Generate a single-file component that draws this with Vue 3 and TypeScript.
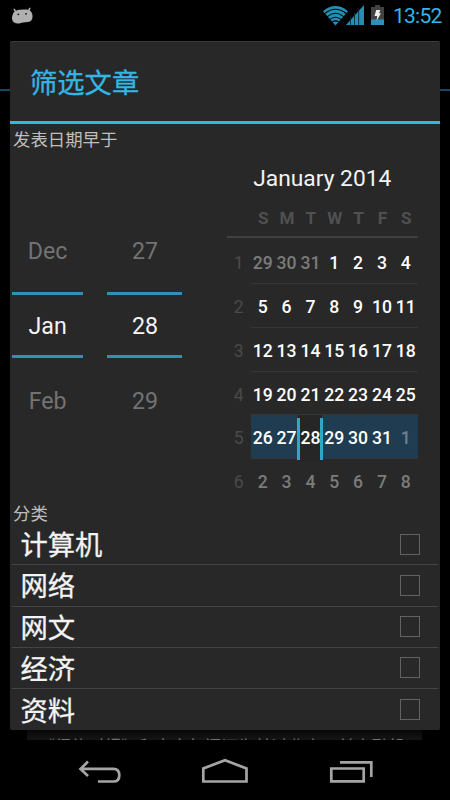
<script setup lang="ts">
interface Day { n: number; out?: boolean; picked?: boolean }
interface Week { no: number; days: Day[]; active: boolean }

const weekdays = ['S', 'M', 'T', 'W', 'T', 'F', 'S']
const previousMonth = [29, 30, 31]
const weeks: Week[] = Array.from({ length: 6 }, (_, w) => ({
  no: w + 1,
  active: w === 4,
  days: Array.from({ length: 7 }, (_, d) => {
    const i = w * 7 + d
    if (i < 3) return { n: previousMonth[i], out: true }
    const n = i - 2
    return n > 31 ? { n: n - 31, out: true } : { n, picked: n === 28 }
  }),
}))
const spinners = [
  { name: 'month', values: ['Dec', 'Jan', 'Feb'] },
  { name: 'day', values: ['27', '28', '29'] },
]
const categories = ['计算机', '网络', '网文', '经济', '资料']
</script>

<template>
  <div class="screen">
    <header class="status">
      <svg class="droid" width="24" height="18" viewBox="0 0 24 18">
        <path d="M3.2 2.4 5 5M18.8 1.4 17.4 4.4" stroke="#b0b0b0" stroke-width="1.5" stroke-linecap="round" />
        <path d="M1.8 7.5C3 3.4 7 2.9 11.5 2.6C17 2 20.3 3 21.3 7.3C22 11 21.2 13.2 19 14.4C16 15.6 12.5 14.8 9.8 15.9C6.5 17.2 2.6 16.3 1.4 13.2C.6 11 1.1 9.3 1.8 7.5Z" fill="#b0b0b0" />
        <circle cx="7.3" cy="7.3" r=".9" fill="#111" /><circle cx="15" cy="6.8" r=".9" fill="#111" />
      </svg>
      <div class="indicators">
        <svg class="wifi" width="26" height="20" viewBox="0 0 26 20">
          <path d="M0 5.2Q12.5-5 25 5.2L12.5 19.5Z" fill="#278db6" />
          <g fill="none" stroke="#000" stroke-width="1.1">
            <path d="M1.5 7.8Q12.5-1.2 23.5 7.8" /><path d="M4 10.8Q12.5 3.8 21 10.8" /><path d="M6.5 13.6Q12.5 8.8 18.5 13.6" /><path d="M9 16.1Q12.5 13.7 16 16.1" />
          </g>
        </svg>
        <svg class="signal" width="19" height="20" viewBox="0 0 19 20">
          <path d="M0 20 18 0V20Z" fill="#278db6" />
          <path d="M4.5 12V20M8.5 8V20M12.7 3V20" stroke="#0b2937" stroke-width=".9" />
        </svg>
        <svg class="battery" width="13" height="20" viewBox="0 0 13 20">
          <path d="M4 0H9V2H13V20H0V2H4Z" fill="#424242" />
          <path d="M0 14.5H13V20H0Z" fill="#2b91b9" />
          <path d="M5.2 5H9.3L8.1 8.3H10L5.6 15.8L6.2 11H3.5Z" fill="#eee" />
        </svg>
        <span class="clock">13:52</span>
      </div>
    </header>

    <div class="action-line"></div>

    <section class="dialog">
      <h1>筛选文章</h1>
      <div class="label">发表日期早于</div>
      <div class="date-picker">
        <div class="spinners">
          <div v-for="s in spinners" :key="s.name" class="spinner" :class="s.name">
            <span class="dim">{{ s.values[0] }}</span>
            <span class="current">{{ s.values[1] }}</span>
            <span class="dim">{{ s.values[2] }}</span>
          </div>
        </div>
        <div class="calendar">
          <div class="month-title">January 2014</div>
          <div class="weekdays">
            <span></span><span v-for="(d, i) in weekdays" :key="i">{{ d }}</span>
          </div>
          <div v-for="w in weeks" :key="w.no" class="week">
            <span class="number">{{ w.no }}</span>
            <div class="days" :class="{ active: w.active }">
              <span v-for="d in w.days" :key="d.n" :class="{ out: d.out, picked: d.picked }">{{ d.n }}</span>
            </div>
          </div>
        </div>
      </div>
      <div class="label category-label">分类</div>
      <ul class="categories">
        <li v-for="c in categories" :key="c"><span>{{ c }}</span><i class="box"></i></li>
      </ul>
    </section>

    <div class="article">《纽约时报》和商家每间河为某过北京，前立融机</div>

    <nav class="navbar">
      <svg width="450" height="60" viewBox="0 0 450 60" fill="none" stroke="#a5a5a5" stroke-width="2.7">
        <path d="M88 21.5 80.5 29 88 36M81 28.8H113.5Q119.3 28.8 119.3 35.2Q119.3 41.5 113.5 41.5H98" />
        <path d="M203.3 41.5V28.5L225 20.2L246.5 28.5V41.5Z" />
        <path d="M331.3 28.5H363.7V41.3H331.3ZM340 22.4H371.3V37" />
      </svg>
    </nav>
  </div>
</template>

<style>
body { background: #000; }
</style>

<style scoped>
* { box-sizing: border-box; }
.screen {
  width: 450px; height: 800px; overflow: hidden; background: #000;
  display: flex; flex-direction: column; position: relative;
  font-family: Roboto, "Noto Sans CJK SC", sans-serif; color: #f3f3f3;
}
.status { height: 41px; flex: none; display: flex; justify-content: space-between; align-items: flex-start; padding: 6px 7px 0 11px; }
.droid { margin-top: 1px; }
.indicators { display: flex; align-items: flex-start; }
.signal { margin-left: -3px; margin-top: -1px; }
.battery { margin: -1px 9px 0 6px; }
.clock { width: 50px; font-size: 21px; line-height: 21px; letter-spacing: -.75px; color: #33b5e5; white-space: nowrap; }
.action-line { position: absolute; left: 0; right: 0; top: 89px; height: 2px; background: #14485e; }
.dialog {
  position: relative; width: 430px; height: 689px; flex: none; margin-left: 10px;
  background: #282828; border-radius: 2px; border-top: 1px solid #3b3b3b;
  display: flex; flex-direction: column;
}
h1 {
  margin: 0; height: 82px; flex: none; padding-left: 20px; border-bottom: 3px solid #33b5e5;
  font-size: 27.3px; font-weight: 400; line-height: 84px; color: #33b5e5; -webkit-text-stroke: .3px;
}
.label { height: 30px; flex: none; padding-left: 3px; font-size: 17.4px; line-height: 32px; color: #bebebe; }
.date-picker { height: 349px; flex: none; display: flex; }
.spinners { width: 216.8px; flex: none; display: flex; align-items: flex-start; gap: 24.5px; padding: 58px 0 0 2.3px; }
.spinner { display: flex; flex-direction: column; text-align: center; font-size: 23.2px; }
.month { width: 70.7px; }
.day { width: 75px; }
.dim { height: 79.5px; line-height: 79px; color: #737373; }
.current { height: 66px; line-height: 62px; border: solid #3090b5; border-width: 3px 0; color: #f4f4f4; }
.dim:last-child { line-height: 86px; }
.calendar { width: 191px; }
.month-title { height: 49px; padding-top: 9px; line-height: 32px; font-size: 22.8px; text-align: center; }
.weekdays {
  display: grid; grid-template-columns: 24px repeat(7, 23.85px); height: 35px;
  border-bottom: 2px solid #404040; text-align: center; font-size: 17.2px; line-height: 30px; font-weight: 700; color: #505050;
}
.weekdays span { padding-left: 1px; }
.week { height: 43.8px; display: flex; line-height: 47px; font-size: 17.6px; text-align: center; }
.week:nth-child(3) { height: 46px; line-height: 51px; }
.number { width: 24px; color: #4a4a4a; }
.days { width: 167px; display: grid; grid-template-columns: repeat(7, 23.85px); border-bottom: 1px solid #353535; font-weight: 500; color: #fff; }
.week:last-child .days { border: 0; }
.out { color: #7b7b7b; }
.active { background: #203c50; }
.active .out { color: #70818c; }
.picked { background: #262626; position: relative; }
.picked::before, .picked::after { content: ""; position: absolute; top: 3px; bottom: 2px; width: 3px; background: #32a5cd; }
.picked::before { left: -1.5px; }
.picked::after { right: -1px; }
.category-label { height: 21px; line-height: 22px; }
.categories { list-style: none; margin: 0; padding: 0 2px; }
li { height: 41.25px; display: flex; align-items: center; justify-content: space-between; padding: 0 18px 0 8.5px; border-bottom: 1.5px solid #444; font-size: 27.3px; line-height: 40px; }
li span { padding-top: 4px; -webkit-text-stroke: .3px; }
li:last-child { border: 0; }
.box { width: 20px; height: 21px; border: 1px solid #626262; }
.article {
  width: 395px; height: 10px; flex: none; margin-left: 27px; padding-left: 11px; overflow: hidden;
  background: linear-gradient(#070707, #151515); color: #707070; font-size: 16.7px; line-height: 35px; white-space: nowrap;
}
.navbar { height: 60px; flex: none; }
.navbar svg { display: block; }
</style>
